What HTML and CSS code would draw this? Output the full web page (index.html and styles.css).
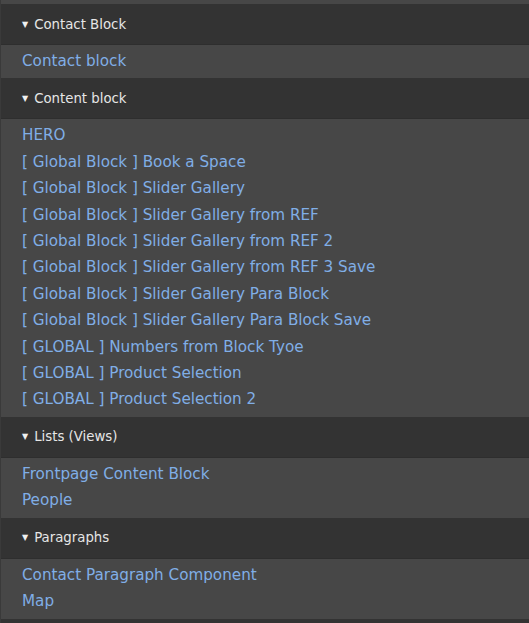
FILE: index.html
```html
<!DOCTYPE html>
<html lang="en">
<head>
  <meta charset="UTF-8">
  <meta name="viewport" content="width=device-width, initial-scale=1.0">
  <title>Block Library</title>
  <link rel="stylesheet" href="styles.css">
</head>
<body>
  <div class="library">
    <div class="group-tail"></div>

    <div class="group">
      <div class="group-title"><span class="caret">&#9660;</span>Contact Block</div>
      <ul class="group-items">
        <li><a href="#">Contact block</a></li>
      </ul>
    </div>

    <div class="group">
      <div class="group-title"><span class="caret">&#9660;</span>Content block</div>
      <ul class="group-items">
        <li><a href="#">HERO</a></li>
        <li><a href="#">[ Global Block ] Book a Space</a></li>
        <li><a href="#">[ Global Block ] Slider Gallery</a></li>
        <li><a href="#">[ Global Block ] Slider Gallery from REF</a></li>
        <li><a href="#">[ Global Block ] Slider Gallery from REF 2</a></li>
        <li><a href="#">[ Global Block ] Slider Gallery from REF 3 Save</a></li>
        <li><a href="#">[ Global Block ] Slider Gallery Para Block</a></li>
        <li><a href="#">[ Global Block ] Slider Gallery Para Block Save</a></li>
        <li><a href="#">[ GLOBAL ] Numbers from Block Tyoe</a></li>
        <li><a href="#">[ GLOBAL ] Product Selection</a></li>
        <li><a href="#">[ GLOBAL ] Product Selection 2</a></li>
      </ul>
    </div>

    <div class="group">
      <div class="group-title"><span class="caret">&#9660;</span>Lists (Views)</div>
      <ul class="group-items">
        <li><a href="#">Frontpage Content Block</a></li>
        <li><a href="#">People</a></li>
      </ul>
    </div>

    <div class="group">
      <div class="group-title"><span class="caret">&#9660;</span>Paragraphs</div>
      <ul class="group-items">
        <li><a href="#">Contact Paragraph Component</a></li>
        <li><a href="#">Map</a></li>
      </ul>
    </div>

    <!-- next group header, scrolled out of view -->
    <div class="group">
      <div class="group-title"></div>
    </div>
  </div>
</body>
</html>
```

FILE: styles.css
```css
html, body {
  margin: 0;
  padding: 0;
  background-color: #474747;
}
body {
  font-family: "DejaVu Sans", "Open Sans", sans-serif;
  overflow: hidden;
}
.library {
  border-left: 1px solid #3a3a3a;
  min-height: 100vh;
}
.group-tail {
  height: 4px;
  background-color: #474747;
}
.group-title {
  height: 40px;
  display: flex;
  align-items: center;
  padding-left: 21px;
  background-color: #333333;
  border-bottom: 1px solid #2e2e2e;
  color: #e6e6e6;
  font-size: 13.3px;
}
.caret {
  font-size: 8px;
  margin-right: 6px;
  color: #f0f0f0;
}
.group-items {
  list-style: none;
  margin: 0;
  padding: 3px 0 4px 21px;
  background-color: #474747;
}
.group-items li {
  line-height: 26.4px;
  font-size: 15.2px;
}
.group-items a {
  color: #80aee6;
  text-decoration: none;
}
```
